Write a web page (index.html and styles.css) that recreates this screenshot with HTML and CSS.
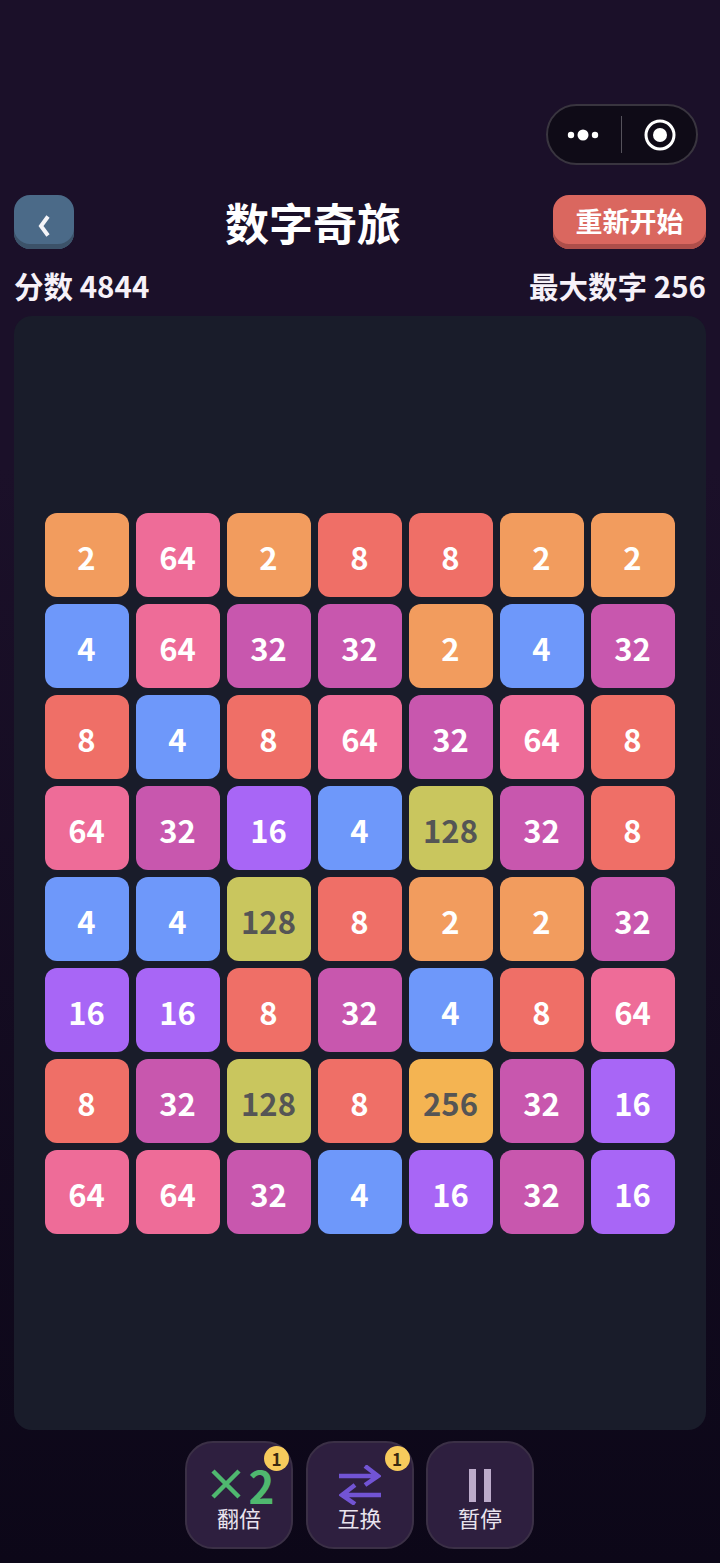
FILE: index.html
```html
<!DOCTYPE html>
<html lang="zh">
<head>
<meta charset="utf-8">
<title>数字奇旅</title>
<link rel="stylesheet" href="styles.css">
</head>
<body>
<div class="capsule">
  <svg class="cap-dots" width="34" height="14" viewBox="0 0 34 14"><circle cx="4" cy="7" r="3.2" fill="#fff"/><circle cx="16" cy="7" r="5.5" fill="#fff"/><circle cx="28" cy="7" r="3.2" fill="#fff"/></svg>
  <span class="cap-line"></span>
  <svg class="cap-target" width="32" height="32" viewBox="0 0 32 32"><circle cx="16" cy="16" r="14" fill="none" stroke="#fff" stroke-width="3"/><circle cx="16" cy="16" r="7" fill="#fff"/></svg>
</div>
<main class="page">
  <header class="head">
    <button class="btn back"><svg width="12" height="22" viewBox="0 0 12 22"><path d="M10 1.5 L3 11 L10 20.5" fill="none" stroke="#f4f4f8" stroke-width="4"/></svg></button>
    <h1 class="title">数字奇旅</h1>
    <button class="btn restart">重新开始</button>
  </header>
  <div class="stats"><span>分数 4844</span><span>最大数字 256</span></div>
  <section class="board">
    <div class="grid">
      <div class="t t2">2</div><div class="t t64">64</div><div class="t t2">2</div><div class="t t8">8</div><div class="t t8">8</div><div class="t t2">2</div><div class="t t2">2</div>
      <div class="t t4">4</div><div class="t t64">64</div><div class="t t32">32</div><div class="t t32">32</div><div class="t t2">2</div><div class="t t4">4</div><div class="t t32">32</div>
      <div class="t t8">8</div><div class="t t4">4</div><div class="t t8">8</div><div class="t t64">64</div><div class="t t32">32</div><div class="t t64">64</div><div class="t t8">8</div>
      <div class="t t64">64</div><div class="t t32">32</div><div class="t t16">16</div><div class="t t4">4</div><div class="t t128">128</div><div class="t t32">32</div><div class="t t8">8</div>
      <div class="t t4">4</div><div class="t t4">4</div><div class="t t128">128</div><div class="t t8">8</div><div class="t t2">2</div><div class="t t2">2</div><div class="t t32">32</div>
      <div class="t t16">16</div><div class="t t16">16</div><div class="t t8">8</div><div class="t t32">32</div><div class="t t4">4</div><div class="t t8">8</div><div class="t t64">64</div>
      <div class="t t8">8</div><div class="t t32">32</div><div class="t t128">128</div><div class="t t8">8</div><div class="t t256">256</div><div class="t t32">32</div><div class="t t16">16</div>
      <div class="t t64">64</div><div class="t t64">64</div><div class="t t32">32</div><div class="t t4">4</div><div class="t t16">16</div><div class="t t32">32</div><div class="t t16">16</div>
    </div>
  </section>
  <nav class="tools">
    <div class="tool">
      <span class="badge">1</span>
      <div class="ico double">
        <svg width="30" height="30" viewBox="0 0 30 30"><path d="M2 2 L28 28 M28 2 L2 28" stroke="#4fb86f" stroke-width="4.5" fill="none"/></svg>
        <span class="two">2</span>
      </div>
      <span class="lab">翻倍</span>
    </div>
    <div class="tool">
      <span class="badge">1</span>
      <div class="ico swap">
        <svg width="42" height="40" viewBox="0 0 42 40"><path d="M0 11 H38 M26 1 L39 11 L26 20" stroke="#7254d4" stroke-width="4.5" fill="none"/><path d="M42 30 H4 M16 20 L3 30 L16 39" stroke="#7254d4" stroke-width="4.5" fill="none"/></svg>
      </div>
      <span class="lab">互换</span>
    </div>
    <div class="tool">
      <div class="ico pause"><i></i><i></i></div>
      <span class="lab">暂停</span>
    </div>
  </nav>
</main>
</body>
</html>
```
FILE: styles.css
```css
* { box-sizing: border-box; }
html, body { margin: 0; padding: 0; }
body {
  width: 720px;
  height: 1563px;
  overflow: hidden;
  position: relative;
  background: linear-gradient(180deg, #1b1029 0%, #1b1029 30%, #0c0718 100%);
  font-family: "Noto Sans CJK SC", "Noto Sans", sans-serif;
  color: #fff;
}
.capsule {
  position: absolute;
  left: 546px;
  top: 104px;
  width: 152px;
  height: 61px;
  border-radius: 31px;
  border: 2px solid #39353f;
  background: #0f0b17;
  display: flex;
  align-items: center;
}
.cap-dots { margin-left: 19px; }
.cap-line { width: 1px; height: 37px; background: #55525b; margin-left: 20px; }
.cap-target { margin-left: 22px; }
.page { padding: 195px 14px 0; display: flex; flex-direction: column; height: 100%; }
.head { display: flex; justify-content: space-between; align-items: center; height: 54px; position: relative; }
.btn {
  border: 0;
  padding: 0;
  height: 54px;
  color: #fff;
  display: flex;
  align-items: center;
  justify-content: center;
  font-family: inherit;
}
.back {
  width: 60px;
  border-radius: 16px;
  background: #4b6a88;
  box-shadow: inset 0 -5px 0 #3c5269;
  padding-top: 7px;
}
.restart {
  width: 153px;
  border-radius: 16px;
  background: #da675f;
  box-shadow: inset 0 -5px 0 #ad4e4a;
  font-size: 27px;
  font-weight: 600;
  padding-bottom: 4px;
}
.title {
  margin: 0;
  font-size: 44px;
  font-weight: 700;
  line-height: 54px;
  position: absolute;
  left: 211px;
  top: 0;
}
.stats {
  display: flex;
  justify-content: space-between;
  font-size: 29.5px;
  font-weight: 600;
  line-height: 40px;
  margin-top: 16px;
  height: 41px;
  color: #f6f1f8;
}
.board {
  margin-top: 10px;
  width: 692px;
  height: 1114px;
  border-radius: 18px;
  background: #191c2a;
  display: flex;
  align-items: center;
  justify-content: center;
  padding-right: 1px;
}
.grid { display: grid; grid-template-columns: repeat(7, 84px); grid-auto-rows: 84px; gap: 7px; }
.t {
  border-radius: 12px;
  display: flex;
  align-items: center;
  justify-content: center;
  font-size: 31px;
  font-weight: 600;
  color: #fff;
  padding-top: 4px;
}
.t2 { background: #f29c5e; }
.t4 { background: #6e98fa; }
.t8 { background: #ef6f67; }
.t16 { background: #a866f6; }
.t32 { background: #c857ae; }
.t64 { background: #ee6c98; }
.t128 { background: #c9c65e; color: #555; }
.t256 { background: #f4b452; color: #555; }
.tools { display: flex; justify-content: center; gap: 12.5px; margin-top: 11px; padding-right: 1px; }
.tool {
  position: relative;
  width: 108px;
  height: 108px;
  border-radius: 28px;
  border: 2px solid #3b3046;
  background: #2e1f3f;
  display: flex;
  flex-direction: column;
  align-items: center;
}
.badge {
  position: absolute;
  right: 2px;
  top: 3px;
  width: 25px;
  height: 25px;
  border-radius: 50%;
  background: #f7cb5c;
  color: #3a2a10;
  font-size: 17px;
  font-weight: 600;
  line-height: 25px;
  text-align: center;
}
.ico { height: 59px; display: flex; align-items: flex-start; justify-content: center; }
.double { gap: 8px; padding-top: 26px; margin-left: 7px; }
.two { font-size: 44px; font-weight: 600; color: #4fb86f; line-height: 32px; }
.swap { padding-top: 22px; }
.pause { gap: 7.5px; padding-top: 26px; }
.pause i { display: block; width: 7.5px; height: 33px; background: #bdaccb; }
.lab { font-size: 22px; line-height: 30px; color: #e9e3ee; }
```
